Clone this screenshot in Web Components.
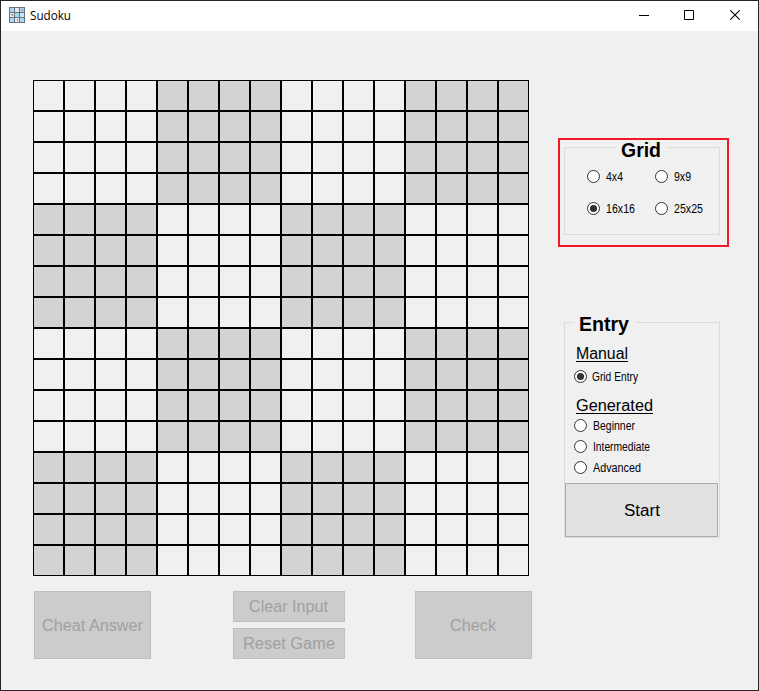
<!DOCTYPE html>
<html lang="en"><head><meta charset="utf-8"><title>Sudoku</title>
<style>html,body{margin:0;height:100%;overflow:hidden;background:#efefef}</style></head><body>
<sudoku-window></sudoku-window>
<script>
const define=(name,html,ready)=>{
  const t=document.createElement('template');t.innerHTML=html;
  customElements.define(name,class extends HTMLElement{
    connectedCallback(){
      if(this.shadowRoot)return;
      this.attachShadow({mode:'open'}).append(t.content.cloneNode(true));
      if(ready)ready(this,this.shadowRoot);
    }
  });
};

// Text drawn at an exact width given by the "w" attribute.
define('fit-text',`<style>:host{display:block;white-space:nowrap;flex:none}span{display:inline-block;transform-origin:0 50%}</style><span><slot></slot></span>`,(h,r)=>{
  const s=r.querySelector('span'),w=+h.getAttribute('w');
  h.style.width=w+'px';
  s.style.transform=`scaleX(${w/s.getBoundingClientRect().width})`;
});

define('title-bar',`<style>
:host{display:flex;align-items:center;height:30px;background:#fff;padding-left:8px;box-sizing:border-box;font:12px/16px "Open Sans","Noto Sans",sans-serif;color:#000}
.logo{margin-right:5px;flex:none;margin-top:-2px}nav{margin-left:auto;display:flex;height:30px}nav svg{display:block}
</style>
<svg class="logo" width="16" height="16" shape-rendering="crispEdges"><rect width="16" height="16" fill="#eee9ec"/>
<path fill="#a9d9ec" d="M1 1h4v4H1zM11 1h4v4h-4zM6 6h4v4H6zM1 11h4v4H1zM11 11h4v4h-4z"/>
<path fill="#c9e6f1" d="M11 6h4v4h-4z"/>
<path fill="#65747f" d="M0 0h16v1H0zM0 15h16v1H0zM0 0h1v16H0zM15 0h1v16h-1zM5 0h1v16H5zM10 0h1v16h-1zM0 5h16v1H0zM0 10h16v1H0z"/>
<path fill="#8c8d94" d="M13 2h1v2h-1zM2 7h2v1H2zM3 8h1v1H3zM8 12h1v2H8z"/></svg>
<slot></slot>
<nav><svg width="46" height="30"><path d="M19 14.5h10" stroke="#000"/></svg><svg width="45" height="30"><path d="M18.5 9.5h9v9h-9z" fill="none" stroke="#000"/></svg><svg width="47" height="30"><path d="M19.3 9.3l9.4 9.4M28.7 9.3l-9.4 9.4" stroke="#000" stroke-width="1.1"/></svg></nav>`);

define('sudoku-grid',`<style>:host{display:grid;grid-template-columns:repeat(16,31px);grid-auto-rows:31px;width:496px}
i{border:1px solid #000;background:#f0f0f0}i.dark{background:#d3d3d3}</style>`,(h,r)=>{
  for(let y=0;y<16;y++)for(let x=0;x<16;x++){
    const c=document.createElement('i');
    if(((x>>2)+(y>>2))%2)c.className='dark';
    r.append(c);
  }
});

define('push-button',`<style>
:host{display:block}
button{display:flex;align-items:center;justify-content:center;width:100%;height:100%;box-sizing:border-box;margin:0;padding:var(--drop,0) 2px 0 0;border:1px solid #adadad;background:#e1e1e1;color:#000;font:16px/20px "Liberation Sans",Arial,sans-serif}
:host([disabled]) button{background:#ccc;border-color:#bfbfbf;color:#a0a0a0}
</style><button><slot></slot></button>`,(h,r)=>{r.querySelector('button').disabled=h.hasAttribute('disabled')});

define('radio-option',`<style>
:host{display:flex;align-items:center;height:13px;font:12px/14px "Liberation Sans",Arial,sans-serif;color:#000}
svg{flex:none;margin-right:var(--gap,6px)}circle.dot{display:none;fill:#333}:host([checked]) .dot{display:block}
</style><svg width="13" height="13"><circle cx="6.5" cy="6.5" r="6" fill="#fff" stroke="#333"/><circle class="dot" cx="6.5" cy="6.5" r="3.6"/></svg><slot></slot>`);

define('group-box',`<style>
:host{display:block;box-sizing:border-box;border:1px solid #dcdcdc}
header{display:flex;justify-content:center;width:max-content;box-sizing:border-box;background:linear-gradient(transparent 6px,#f0f0f0 6px);margin:-11px 0 0 var(--legend-x);padding:var(--legend-drop,0) 7px 0 5px;height:24px;font:bold 20.5px/24px "Liberation Sans",Arial,sans-serif;color:#000}
</style><header><slot name="legend"></slot></header><slot></slot>`);

define('grid-panel',`<style>
:host{display:block;box-sizing:border-box;width:171px;height:109px;border:2px solid #ed1c24;padding:7px 4px}
group-box{width:156px;height:88px;--legend-x:51px;--legend-drop:1px}
.opts{display:grid;grid-template-columns:68px 60px;row-gap:19px;padding:9px 0 0 22px}
</style><group-box><fit-text slot="legend" w="40">Grid</fit-text><div class="opts">
<radio-option><fit-text w="17">4x4</fit-text></radio-option><radio-option><fit-text w="17">9x9</fit-text></radio-option>
<radio-option checked><fit-text w="29">16x16</fit-text></radio-option><radio-option><fit-text w="29">25x25</fit-text></radio-option></div></group-box>`);

define('entry-panel',`<style>
:host{display:block}
group-box{width:156px;height:216px;--legend-x:9px}
.list{display:flex;flex-direction:column;height:147px;padding-left:9px;font:16px/18px "Liberation Sans",Arial,sans-serif}
h3{font:inherit;margin:9px 0 0 2px;height:17px;line-height:18px;width:max-content;border-bottom:1px solid #000;box-sizing:border-box}
.one{margin-top:8px}.g{margin-top:14px}.list .two{margin-top:5px}.list .n{margin-top:8px}
push-button{width:153px;height:54px;--drop:2px}
</style><group-box><fit-text slot="legend" w="50">Entry</fit-text>
<div class="list"><h3><fit-text w="52">Manual</fit-text></h3><radio-option class="one" style="--gap:5px" checked><fit-text w="46">Grid Entry</fit-text></radio-option>
<h3 class="g"><fit-text w="77">Generated</fit-text></h3><radio-option class="two"><fit-text w="42">Beginner</fit-text></radio-option><radio-option class="n"><fit-text w="57">Intermediate</fit-text></radio-option><radio-option class="n"><fit-text w="48">Advanced</fit-text></radio-option></div>
<push-button><fit-text w="36">Start</fit-text></push-button></group-box>`);

define('sudoku-window',`<style>
:host{display:block;box-sizing:border-box;width:759px;height:691px;border:1px solid #252427;background:#f0f0f0;overflow:hidden}
main{display:grid;grid-template-columns:499px 171px;column-gap:26px;padding:49px 0 0 32px}
.actions{display:grid;grid-template-columns:117px 112px 117px;column-gap:0;justify-content:space-between;height:68px;margin:15px 0 0 1px}
.actions push-button{height:68px;--drop:2px}.stack{display:flex;flex-direction:column;gap:6px;margin-left:6px;width:112px}.actions .stack push-button{height:31px;--drop:0}
aside{padding-top:58px}entry-panel{margin:75px 0 0 6px}
</style><title-bar><fit-text w="41">Sudoku</fit-text></title-bar>
<main><section><sudoku-grid></sudoku-grid><div class="actions"><push-button disabled><fit-text w="101">Cheat Answer</fit-text></push-button>
<div class="stack"><push-button disabled><fit-text w="79">Clear Input</fit-text></push-button><push-button disabled><fit-text w="92">Reset Game</fit-text></push-button></div>
<push-button disabled><fit-text w="46">Check</fit-text></push-button></div></section>
<aside><grid-panel></grid-panel><entry-panel></entry-panel></aside></main>`);
</script></body></html>
